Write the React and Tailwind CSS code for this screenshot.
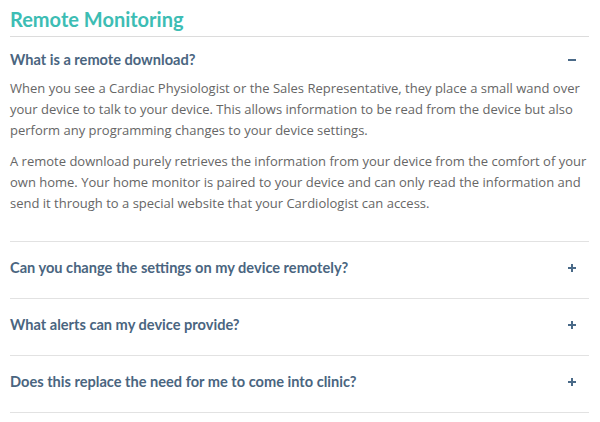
export default function App() {
  const items = [
    "Can you change the settings on my device remotely?",
    "What alerts can my device provide?",
    "Does this replace the need for me to come into clinic?",
  ];
  return (
    <div className="w-[600px] h-[422px] bg-white px-[10px] pt-[6px] overflow-hidden">
      <div className="w-[579px]">
        <h1 className="text-[20px] leading-[26px] font-bold text-[#3dbdb4] pb-[4px] border-b border-[#dcdcdc]" style={{ fontFamily: "Lato, sans-serif" }}>
          Remote Monitoring
        </h1>
        <div className="border-b border-[#e2e2e2] pb-[27px]">
          <div className="flex items-center justify-between h-[41px] pt-[5px]">
            <span className="text-[14.6px] font-bold text-[#4a6580]" style={{ fontFamily: "Lato, sans-serif" }}>What is a remote download?</span>
            <span className="w-[8px] h-[2px] bg-[#4a6a88] mr-[13px]"></span>
          </div>
          <div className="text-[13px] leading-[21px] text-[#666]" style={{ fontFamily: "'Open Sans', sans-serif" }}>
            <p className="mb-[10px]">When you see a Cardiac Physiologist or the Sales Representative, they place a small wand over your device to talk to your device. This allows information to be read from the device but also perform any programming changes to your device settings.</p>
            <p>A remote download purely retrieves the information from your device from the comfort of your own home. Your home monitor is paired to your device and can only read the information and send it through to a special website that your Cardiologist can access.</p>
          </div>
        </div>
        {items.map((q) => (
          <div key={q} className="flex items-center justify-between h-[57px] border-b border-[#e2e2e2] pb-[4px]">
            <span className="text-[14.6px] font-bold text-[#4a6580]" style={{ fontFamily: "Lato, sans-serif" }}>{q}</span>
            <span className="relative w-[8px] h-[8px] mr-[13px]">
              <span className="absolute left-0 top-[3px] w-[8px] h-[2px] bg-[#4a6a88]"></span>
              <span className="absolute left-[3px] top-0 w-[2px] h-[8px] bg-[#4a6a88]"></span>
            </span>
          </div>
        ))}
      </div>
    </div>
  );
}
